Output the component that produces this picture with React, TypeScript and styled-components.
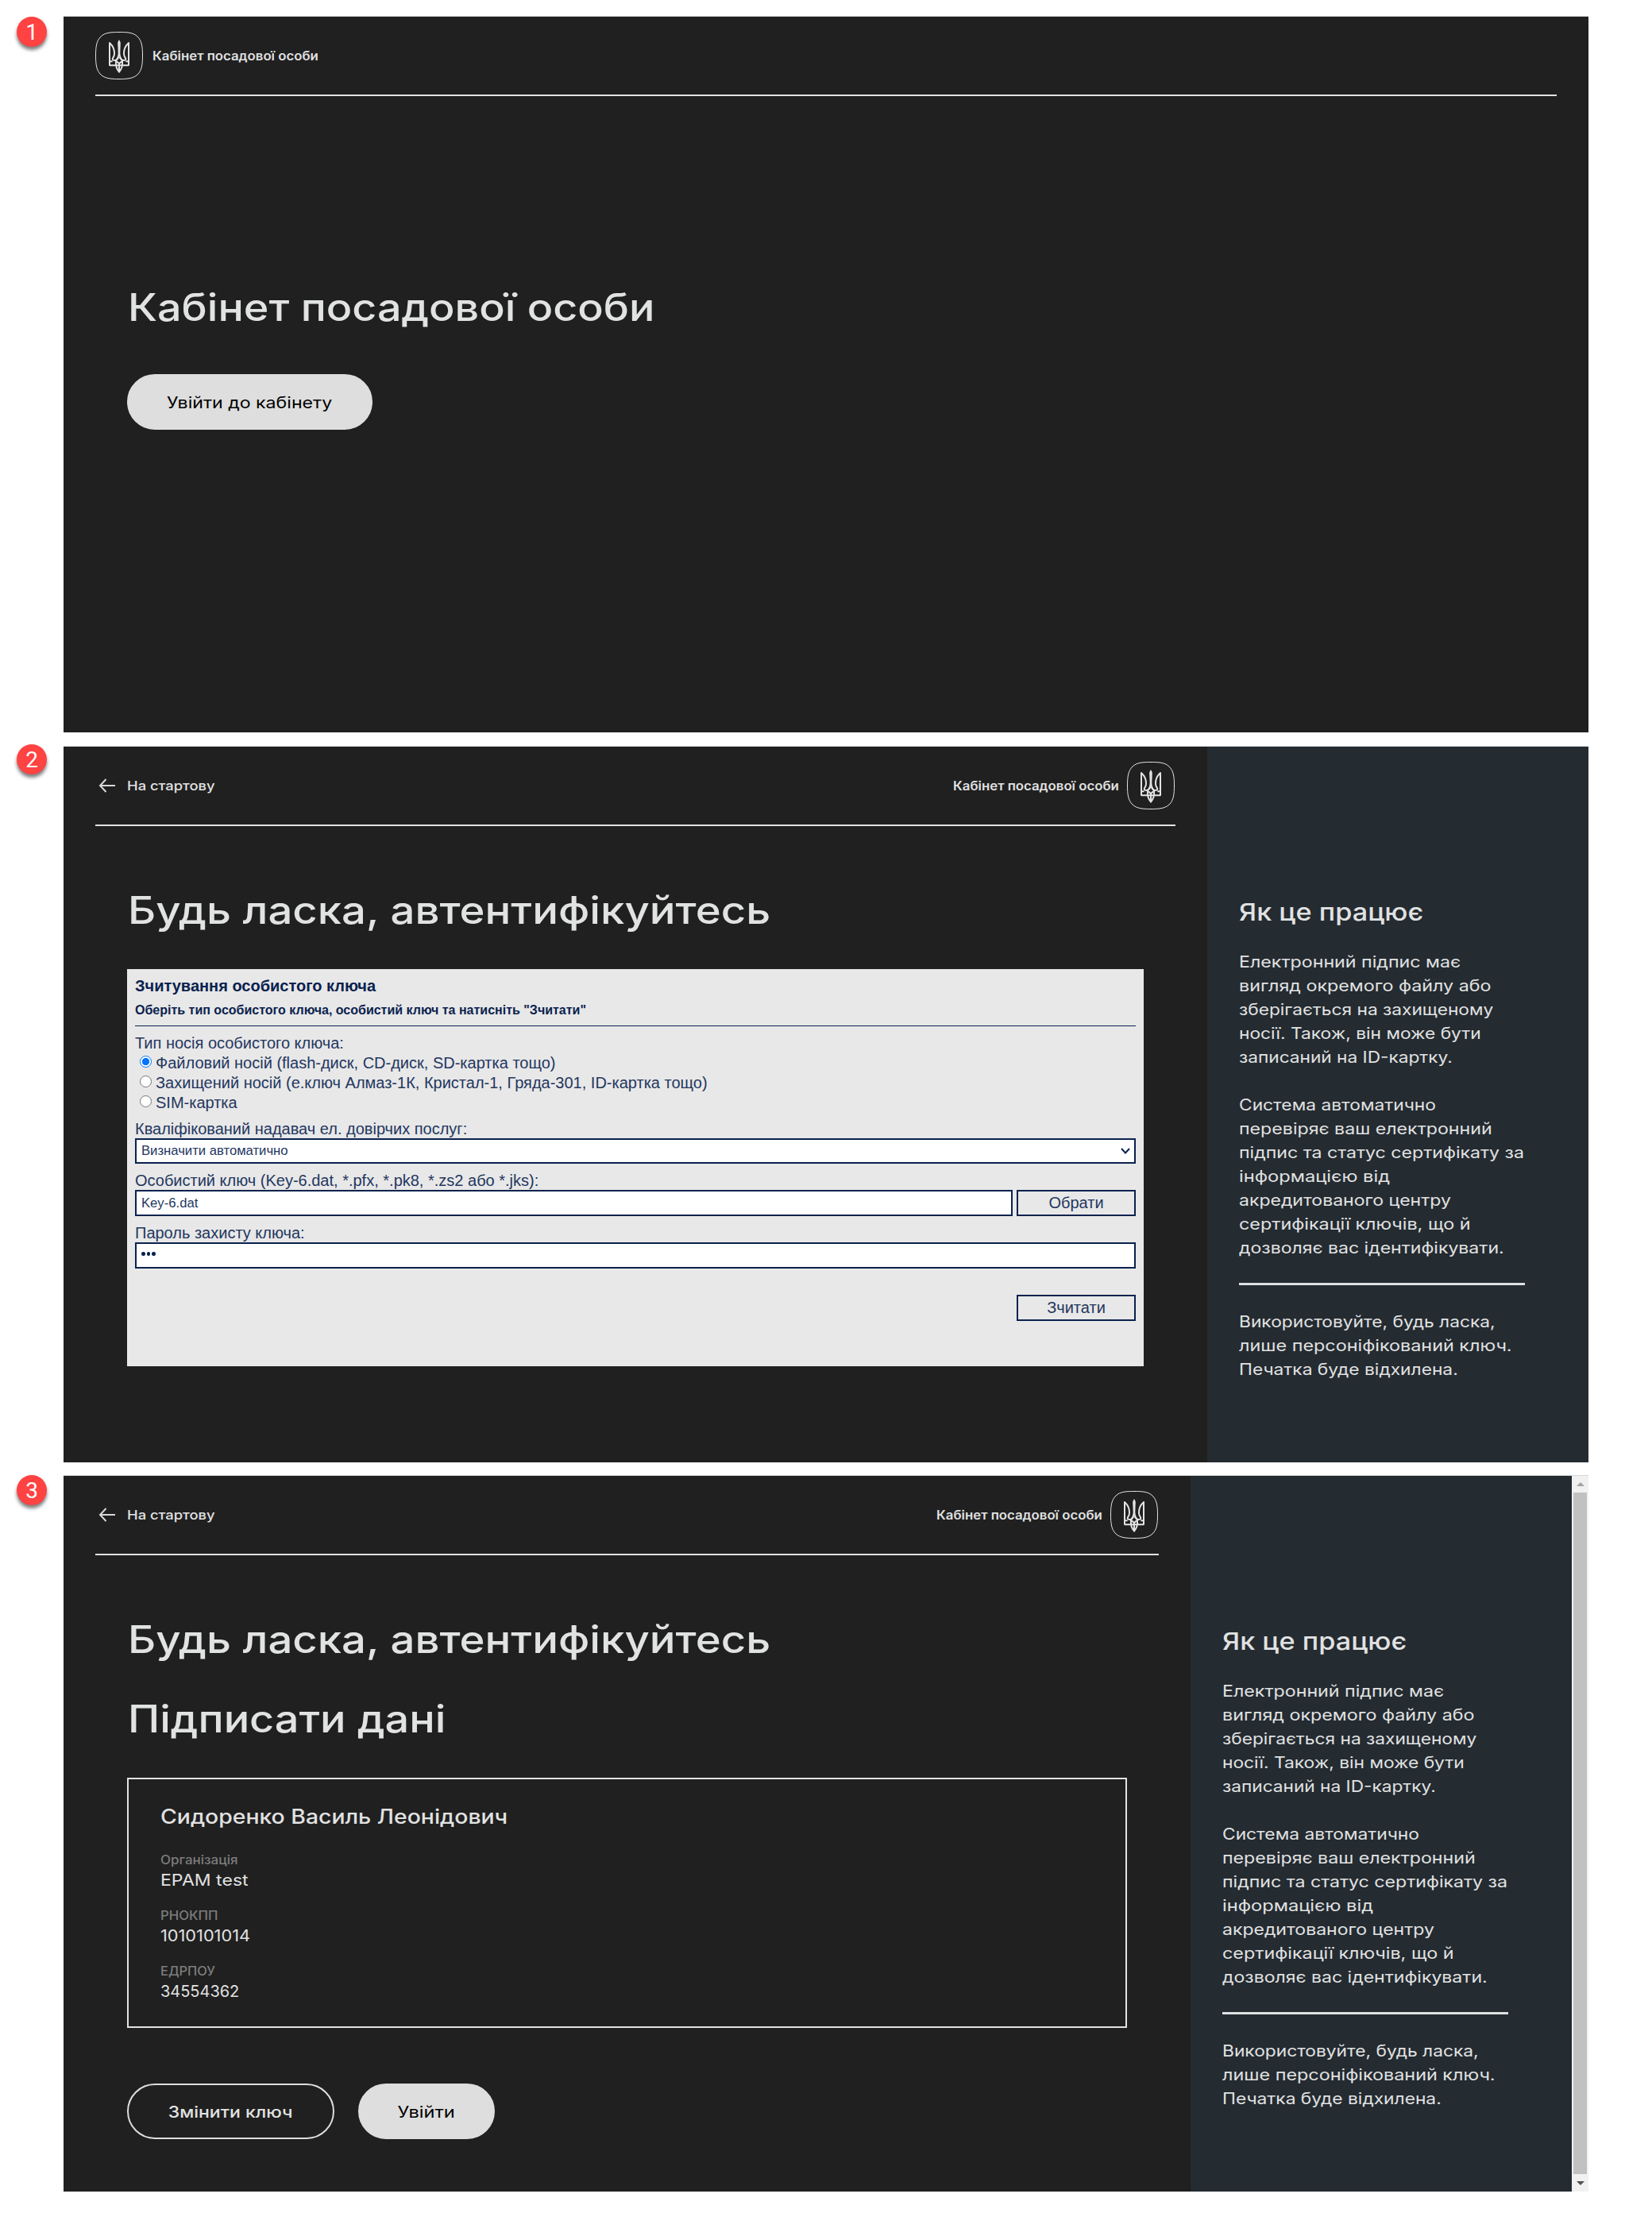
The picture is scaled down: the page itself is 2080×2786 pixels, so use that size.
import React from "react";
import styled, { createGlobalStyle, css } from "styled-components";

const LIGHT = "#e1e2e2";
const NAVY = "#0a224e";

const Global = createGlobalStyle`
  *, *::before, *::after { box-sizing: border-box; }
  body { margin: 0; background: #ffffff; font-family: Inter, "Noto Sans", sans-serif; }
  h1, h2, h3, p { margin: 0; font-weight: inherit; }
`;

const Page = styled.main`
  width: 2080px;
  height: 2786px;
  padding-top: 20px;
  overflow: hidden;
`;

const Step = styled.section<{ $gap?: number }>`
  display: grid;
  grid-template-columns: 80px 1920px;
  height: 902px;
  margin-top: ${(p) => p.$gap ?? 0}px;
`;

const Badge = styled.div<{ $top: number }>`
  width: 38px;
  height: 38px;
  margin: ${(p) => p.$top}px 0 0 21px;
  border-radius: 50%;
  background: #ff4242;
  box-shadow: 0 4px 4px rgba(0, 0, 0, 0.5);
  color: #ffffff;
  font: 400 28px/39px Roboto, "Noto Sans", sans-serif;
  text-align: center;
`;

const Screen = styled.div`
  display: flex;
  border-top: 1px solid #d6d8d8;
  background: #202020;
  color: ${LIGHT};
`;

const Main = styled.div`
  flex: 1;
  min-width: 0;
  padding: 0 40px;
`;

const Header = styled.header`
  display: flex;
  align-items: center;
  justify-content: space-between;
  height: 100px;
  border-bottom: 2px solid ${LIGHT};
`;

const Brand = styled.div<{ $reverse?: boolean }>`
  display: flex;
  align-items: center;
  flex-direction: ${(p) => (p.$reverse ? "row-reverse" : "row")};
  gap: ${(p) => (p.$reverse ? 11 : 12)}px;
  margin-right: ${(p) => (p.$reverse ? 1 : 0)}px;
`;

const BackLink = styled.a`
  display: flex;
  align-items: center;
  gap: 15px;
  padding-left: 4px;
`;

const Wide = styled.span<{ $k: number; $center?: boolean }>`
  display: inline-block;
  white-space: nowrap;
  transform: scaleX(${(p) => p.$k});
  transform-origin: ${(p) => (p.$center ? "50% 50%" : "0 50%")};
`;

const BrandName = styled.div`
  width: 208px;
  padding-top: 2px;
  font-size: 15.5px;
  font-weight: 600;
  line-height: 24px;
`;

const BackText = styled.div`
  font-size: 16.5px;
  font-weight: 500;
  line-height: 24px;
`;

const Body = styled.div<{ $top: number }>`
  padding: ${(p) => p.$top}px 40px 0;
`;

const Heading = styled.h1<{ $mt?: number }>`
  margin-top: ${(p) => p.$mt ?? 0}px;
  padding-left: 1px;
  font-size: 48px;
  font-weight: 500;
  line-height: 60px;
`;

const PillRow = styled.div<{ $mt: number }>`
  display: flex;
  gap: 30px;
  margin-top: ${(p) => p.$mt}px;
`;

const Pill = styled.button<{ $w: number; $outline?: boolean }>`
  width: ${(p) => p.$w}px;
  height: 70px;
  padding: 1px 0 0;
  border: 2px solid #dedede;
  border-radius: 35px;
  font: 400 20px/30px Inter, "Noto Sans", sans-serif;
  ${(p) =>
    p.$outline
      ? css`
          background: transparent;
          color: ${LIGHT};
          font-weight: 500;
        `
      : css`
          background: #dedede;
          color: #000000;
        `}
`;

const Aside = styled.aside<{ $w: number }>`
  width: ${(p) => p.$w}px;
  padding: 188px 0 0 40px;
  background: #242b31;
`;

const AsideTitle = styled.h2`
  margin-bottom: 28px;
  font-size: 30px;
  font-weight: 500;
  line-height: 40px;
`;

const Paragraph = styled.p`
  display: flex;
  flex-direction: column;
  align-items: flex-start;
  font-size: 20px;
  line-height: 30px;
  & + & { margin-top: 30px; }
`;

const AsideRule = styled.hr`
  width: 360px;
  height: 3px;
  margin: 29px 0 31px;
  border: 0;
  background: #dde1e1;
`;

const Form = styled.form`
  height: 500px;
  margin-top: 44px;
  padding: 9px 10px 0;
  background: #e8e8e8;
  color: ${NAVY};
  font-family: "Liberation Sans", Arial, sans-serif;
`;

const FormTitle = styled.h2`
  font-size: 20px;
  font-weight: 700;
  line-height: 24px;
`;

const FormHint = styled.h3`
  margin-top: 9px;
  padding-bottom: 9px;
  border-bottom: 1px solid ${NAVY};
  font-size: 16px;
  font-weight: 700;
  line-height: 20px;
`;

const RadioTitle = styled.div`
  margin-top: 9px;
  font-size: 20px;
  line-height: 25px;
  color: #24375f;
`;

const RadioRow = styled.label`
  display: flex;
  gap: 5px;
  padding-left: 6px;
  font-size: 20px;
  line-height: 25px;
  color: #24375f;
`;

const RadioDot = styled.span<{ $on?: boolean }>`
  width: 15px;
  height: 15px;
  margin-top: 3px;
  border: ${(p) => (p.$on ? "1.5px solid #0075ff" : "1px solid #767676")};
  border-radius: 50%;
  background: ${(p) => (p.$on ? "radial-gradient(circle, #0075ff 4.3px, #ffffff 4.9px)" : "#ffffff")};
`;

const FieldLabel = styled.div<{ $mt: number }>`
  margin-top: ${(p) => p.$mt}px;
  font-size: 20px;
  line-height: 24px;
  color: #24375f;
`;

const FieldRow = styled.div`
  display: flex;
  gap: 5px;
`;

const Field = styled.div<{ $h: number }>`
  display: flex;
  flex: 1;
  align-items: center;
  justify-content: space-between;
  height: ${(p) => p.$h}px;
  padding: 0 5px 0 6px;
  border: 2px solid ${NAVY};
  background: #ffffff;
  color: #24375f;
  font-size: 16.67px;
  line-height: 20px;
`;

const Dots = styled.span`
  display: flex;
  gap: 2px;
  margin-top: -4px;
  i {
    width: 4.5px;
    height: 4.5px;
    border-radius: 50%;
    background: ${NAVY};
  }
`;

const FormButton = styled.button`
  width: 150px;
  height: 33px;
  padding: 0 0 1px;
  border: 2px solid ${NAVY};
  background: transparent;
  color: #24375f;
  font: 400 20px/24px "Liberation Sans", Arial, sans-serif;
`;

const FormFooter = styled.div`
  display: flex;
  justify-content: flex-end;
  margin-top: 33px;
`;

const Card = styled.div`
  height: 315px;
  margin-top: 44px;
  padding: 27px 40px 0;
  border: 2px solid ${LIGHT};
`;

const PersonName = styled.h2`
  margin-bottom: 23px;
  font-size: 25px;
  font-weight: 500;
  line-height: 40px;
`;

const Entry = styled.div`
  margin-bottom: 20px;
`;

const EntryLabel = styled.div`
  font-size: 15.5px;
  font-weight: 500;
  line-height: 24px;
  color: #7d7d7d;
`;

const EntryValue = styled.div`
  font-size: 20px;
  line-height: 26px;
`;

const Scrollbar = styled.div`
  display: flex;
  flex-direction: column;
  align-items: center;
  width: 21px;
  background: #f1f1f1;
`;

const Arrow = styled.div<{ $down?: boolean }>`
  display: flex;
  align-items: center;
  justify-content: center;
  height: ${(p) => (p.$down ? 22 : 21)}px;
  &::before {
    content: "";
    border: 5px solid transparent;
    border-top: ${(p) => (p.$down ? "5px solid #505050" : "0")};
    border-bottom: ${(p) => (p.$down ? "0" : "5px solid #a3a3a3")};
  }
`;

const Thumb = styled.div`
  flex: 1;
  width: 17px;
  background: #c1c1c1;
`;

function Emblem() {
  return (
    <svg width="60" height="60" viewBox="0 0 180 180" fill="none" stroke="#e3e3e3" strokeLinejoin="round">
      <path
        strokeWidth="3"
        d="M90 1.5C118 1.5 143 2 159 18C176 34 178.500 58 178.500 90C178.500 122 176 146 159 162C143 177 118 178.500 90 178.500C62 178.500 37 177 21 162C4 146 1.500 122 1.500 90C1.500 58 4 34 21 18C37 2 62 1.500 90 1.500Z"
      />
      <g strokeWidth="6">
        <path d="M54 128V42C66 53 73 68 72 84C71 96 65 98 65 103C66 110 82 111 88 96" />
        <path d="M126 128V42C114 53 107 68 108 84C109 96 115 98 115 103C114 110 98 111 92 96" />
        <path d="M54 127H126M54 112H65M126 112H115" />
        <path d="M90 78C90 92 86 98 78 110C76 130 83 144 90 152C97 144 104 130 102 110C94 98 90 92 90 78Z" />
        <path d="M90 116V150" />
        <path d="M77 112Q86 114 90 122Q94 114 103 112" />
      </g>
      <path fill="#e3e3e3" stroke="none" d="M90 30C96 38 96 44 95 50L93.500 92H86.500L85 50C84 44 84 38 90 30Z" />
    </svg>
  );
}

function BackArrow() {
  return (
    <svg width="21" height="18" viewBox="0 0 21 18" fill="none" stroke="#d8d8d8" strokeWidth="2">
      <path d="M9.500 1L2 9L9.500 17M2 9H21" />
    </svg>
  );
}

function AppBrand({ reverse }: { reverse?: boolean }) {
  return (
    <Brand $reverse={reverse}>
      <Emblem />
      <BrandName>
        <Wide $k={1.082}>Кабінет посадової особи</Wide>
      </BrandName>
    </Brand>
  );
}

function InnerHeader() {
  return (
    <Header>
      <BackLink>
        <BackArrow />
        <BackText>
          <Wide $k={1.112}>На стартову</Wide>
        </BackText>
      </BackLink>
      <AppBrand reverse />
    </Header>
  );
}

type Line = [text: string, stretch: number];

const aboutSignature: Line[] = [
  ["Електронний підпис має", 1.16],
  ["вигляд окремого файлу або", 1.163],
  ["зберігається на захищеному", 1.136],
  ["носії. Також, він може бути", 1.138],
  ["записаний на ID-картку.", 1.133],
];

const aboutCheck: Line[] = [
  ["Система автоматично", 1.139],
  ["перевіряє ваш електронний", 1.158],
  ["підпис та статус сертифікату за", 1.156],
  ["інформацією від", 1.183],
  ["акредитованого центру", 1.151],
  ["сертифікації ключів, що й", 1.166],
  ["дозволяє вас ідентифікувати.", 1.152],
];

const aboutKey: Line[] = [
  ["Використовуйте, будь ласка,", 1.137],
  ["лише персоніфікований ключ.", 1.168],
  ["Печатка буде відхилена.", 1.138],
];

function Lines({ lines }: { lines: Line[] }) {
  return (
    <Paragraph>
      {lines.map(([text, stretch]) => (
        <Wide key={text} $k={stretch}>
          {text}
        </Wide>
      ))}
    </Paragraph>
  );
}

function HowItWorks({ width }: { width: number }) {
  return (
    <Aside $w={width}>
      <AsideTitle>
        <Wide $k={1.142}>Як це працює</Wide>
      </AsideTitle>
      <Lines lines={aboutSignature} />
      <Lines lines={aboutCheck} />
      <AsideRule />
      <Lines lines={aboutKey} />
    </Aside>
  );
}

function KeyForm() {
  return (
    <Form>
      <FormTitle>Зчитування особистого ключа</FormTitle>
      <FormHint>Оберіть тип особистого ключа, особистий ключ та натисніть "Зчитати"</FormHint>
      <RadioTitle>Тип носія особистого ключа:</RadioTitle>
      <RadioRow>
        <RadioDot $on />
        Файловий носій (flash-диск, CD-диск, SD-картка тощо)
      </RadioRow>
      <RadioRow>
        <RadioDot />
        Захищений носій (е.ключ Алмаз-1К, Кристал-1, Гряда-301, ID-картка тощо)
      </RadioRow>
      <RadioRow>
        <RadioDot />
        SIM-картка
      </RadioRow>
      <FieldLabel $mt={8}>Кваліфікований надавач ел. довірчих послуг:</FieldLabel>
      <Field $h={32}>
        Визначити автоматично
        <svg width="12" height="8" viewBox="0 0 12 8" fill="none" stroke={NAVY} strokeWidth="2">
          <path d="M1 1L6 6.500L11 1" />
        </svg>
      </Field>
      <FieldLabel $mt={9}>Особистий ключ (Key-6.dat, *.pfx, *.pk8, *.zs2 або *.jks):</FieldLabel>
      <FieldRow>
        <Field $h={33}>Key-6.dat</Field>
        <FormButton type="button">Обрати</FormButton>
      </FieldRow>
      <FieldLabel $mt={9}>Пароль захисту ключа:</FieldLabel>
      <Field $h={33}>
        <Dots>
          <i />
          <i />
          <i />
        </Dots>
      </Field>
      <FormFooter>
        <FormButton type="button">Зчитати</FormButton>
      </FormFooter>
    </Form>
  );
}

const entries: { label: string; labelK: number; value: string; valueK: number }[] = [
  { label: "Організація", labelK: 1.095, value: "EPAM test", valueK: 1.153 },
  { label: "РНОКПП", labelK: 1.08, value: "1010101014", valueK: 1.086 },
  { label: "ЕДРПОУ", labelK: 1.058, value: "34554362", valueK: 0.998 },
];

export default function App() {
  return (
    <Page>
      <Global />
      <Step>
        <Badge $top={1}>1</Badge>
        <Screen>
          <Main>
            <Header>
              <AppBrand />
            </Header>
            <Body $top={236}>
              <Heading>
                <Wide $k={1.122}>Кабінет посадової особи</Wide>
              </Heading>
              <PillRow $mt={54}>
                <Pill $w={309}>
                  <Wide $k={1.156} $center>
                    Увійти до кабінету
                  </Wide>
                </Pill>
              </PillRow>
            </Body>
          </Main>
        </Screen>
      </Step>

      <Step $gap={17}>
        <Badge $top={-2}>2</Badge>
        <Screen>
          <Main>
            <InnerHeader />
            <Body $top={76}>
              <Heading>
                <Wide $k={1.135}>Будь ласка, автентифікуйтесь</Wide>
              </Heading>
              <KeyForm />
            </Body>
          </Main>
          <HowItWorks width={480} />
        </Screen>
      </Step>

      <Step $gap={16}>
        <Badge $top={0}>3</Badge>
        <Screen>
          <Main>
            <InnerHeader />
            <Body $top={76}>
              <Heading>
                <Wide $k={1.135}>Будь ласка, автентифікуйтесь</Wide>
              </Heading>
              <Heading $mt={40}>
                <Wide $k={1.125}>Підписати дані</Wide>
              </Heading>
              <Card>
                <PersonName>
                  <Wide $k={1.135}>Сидоренко Василь Леонідович</Wide>
                </PersonName>
                {entries.map((e) => (
                  <Entry key={e.label}>
                    <EntryLabel>
                      <Wide $k={e.labelK}>{e.label}</Wide>
                    </EntryLabel>
                    <EntryValue>
                      <Wide $k={e.valueK}>{e.value}</Wide>
                    </EntryValue>
                  </Entry>
                ))}
              </Card>
              <PillRow $mt={70}>
                <Pill $w={261} $outline>
                  <Wide $k={1.15} $center>
                    Змінити ключ
                  </Wide>
                </Pill>
                <Pill $w={172}>
                  <Wide $k={1.18} $center>
                    Увійти
                  </Wide>
                </Pill>
              </PillRow>
            </Body>
          </Main>
          <HowItWorks width={480} />
          <Scrollbar>
            <Arrow />
            <Thumb />
            <Arrow $down />
          </Scrollbar>
        </Screen>
      </Step>
    </Page>
  );
}
